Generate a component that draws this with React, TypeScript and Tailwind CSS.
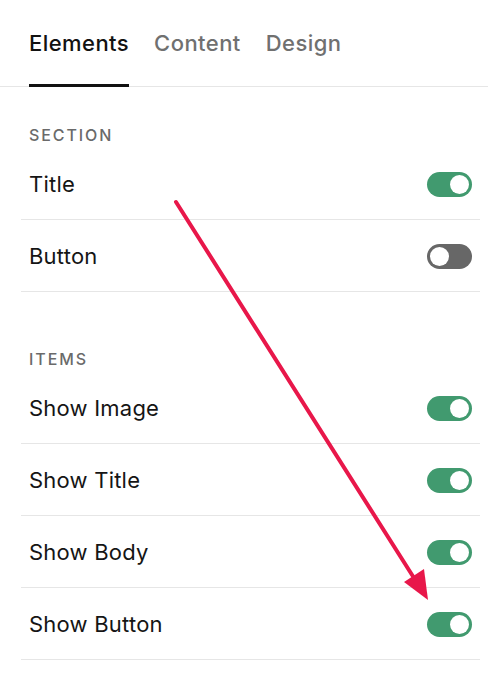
const font = { fontFamily: "Inter, 'Noto Sans', sans-serif" };

function Toggle({ on }: { on: boolean }) {
  return (
    <span
      className={`flex h-[25px] w-[45px] items-center rounded-full px-[3px] ${
        on ? "justify-end bg-[#419a6f]" : "justify-start bg-[#676767]"
      }`}
    >
      <span className="h-[19px] w-[19px] rounded-full bg-white" />
    </span>
  );
}

function Row({ label, on }: { label: string; on: boolean }) {
  return (
    <div className="ml-[21px] mr-[8px] flex h-[72px] items-center justify-between border-b border-[#e6e6e6] pl-[8px] pr-[8px] pt-[2px]">
      <span className="text-[22px] tracking-[0.01em] text-[#151515]">{label}</span>
      <Toggle on={on} />
    </div>
  );
}

function Label({ children }: { children: string }) {
  return (
    <div className="px-[29px] text-[16px] font-medium leading-[20px] tracking-[0.12em] text-[#6a6a6a]">
      {children}
    </div>
  );
}

export default function App() {
  return (
    <div className="relative h-[700px] w-[488px] overflow-hidden bg-white" style={font}>
      <div className="flex h-[87px] gap-[25px] border-b border-[#e6e6e6] px-[29px]">
        {["Elements", "Content", "Design"].map((t, i) => (
          <div key={t} className="relative flex items-center">
            <span
              className={`text-[22px] font-medium tracking-[0.02em] ${
                i === 0 ? "text-[#121212]" : "text-[#707070]"
              }`}
            >
              {t}
            </span>
            {i === 0 && <span className="absolute -bottom-px left-0 right-0 h-[3px] bg-[#111]" />}
          </div>
        ))}
      </div>

      <div className="mt-[38px]">
        <Label>SECTION</Label>
        <div className="mt-[3px]">
          <Row label="Title" on />
          <Row label="Button" on={false} />
        </div>
      </div>

      <div className="mt-[57px]">
        <Label>ITEMS</Label>
        <div className="mt-[3px]">
          <Row label="Show Image" on />
          <Row label="Show Title" on />
          <Row label="Show Body" on />
          <Row label="Show Button" on />
        </div>
      </div>

      <svg className="pointer-events-none absolute inset-0" width="488" height="700">
        <line x1="176" y1="202" x2="414" y2="578" stroke="#e8174a" strokeWidth="4" strokeLinecap="round" />
        <polygon points="428,600 404,582 424,569" fill="#e8174a" />
      </svg>
    </div>
  );
}
